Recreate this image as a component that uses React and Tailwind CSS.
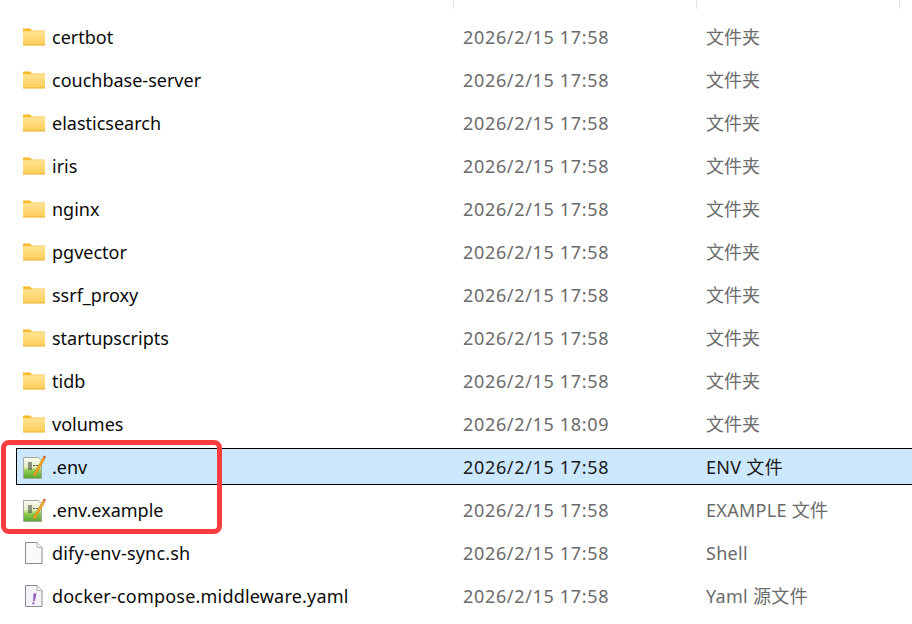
import React from "react";

const font = "font-['Noto_Sans','Noto_Sans_CJK_SC',sans-serif]";

const files = [
    { name: "certbot", date: "2026/2/15 17:58", type: "文件夹", icon: "folder" },
    { name: "couchbase-server", date: "2026/2/15 17:58", type: "文件夹", icon: "folder" },
    { name: "elasticsearch", date: "2026/2/15 17:58", type: "文件夹", icon: "folder" },
    { name: "iris", date: "2026/2/15 17:58", type: "文件夹", icon: "folder" },
    { name: "nginx", date: "2026/2/15 17:58", type: "文件夹", icon: "folder" },
    { name: "pgvector", date: "2026/2/15 17:58", type: "文件夹", icon: "folder" },
    { name: "ssrf_proxy", date: "2026/2/15 17:58", type: "文件夹", icon: "folder" },
    { name: "startupscripts", date: "2026/2/15 17:58", type: "文件夹", icon: "folder" },
    { name: "tidb", date: "2026/2/15 17:58", type: "文件夹", icon: "folder" },
    { name: "volumes", date: "2026/2/15 18:09", type: "文件夹", icon: "folder" },
    { name: ".env", date: "2026/2/15 17:58", type: "ENV 文件", icon: "notepad", selected: true },
    { name: ".env.example", date: "2026/2/15 17:58", type: "EXAMPLE 文件", icon: "notepad" },
    { name: "dify-env-sync.sh", date: "2026/2/15 17:58", type: "Shell", icon: "file" },
    { name: "docker-compose.middleware.yaml", date: "2026/2/15 17:58", type: "Yaml 源文件", icon: "yaml" },
];

const FolderIcon = () => (
    <svg width="23" height="24" viewBox="0 0 23 24">
        <defs>
            <linearGradient id="folderFill" x1="0" y1="0" x2="0" y2="1">
                <stop offset="0" stopColor="#ffe594" />
                <stop offset="1" stopColor="#fdcd5a" />
            </linearGradient>
        </defs>
        <path d="M0 4.5C0 3.9.4 3.5 1 3.5h6L9.5 6H22v1.5H0z" fill="#f9b721" />
        <rect x="0" y="6" width="22" height="14" fill="url(#folderFill)" />
        <rect x="0" y="5.5" width="22" height=".8" fill="#fac34a" />
        <rect x="0" y="19.5" width="22" height="1" fill="#edae2c" />
    </svg>
);

const NotepadIcon = () => (
    <svg width="23" height="26" viewBox="0 0 23 26">
        <defs>
            <linearGradient id="padFill" x1="0" y1="0" x2="0" y2="1">
                <stop offset="0" stopColor="#fbfbf4" />
                <stop offset="0.45" stopColor="#e2eec0" />
                <stop offset="0.62" stopColor="#93cb50" />
                <stop offset="1" stopColor="#52a92f" />
            </linearGradient>
        </defs>
        <path d="M.5 3.5h15l3 3v18H.5z" fill="url(#padFill)" stroke="#a3a89f" />
        <path d="M6 8v8M8 8v8" stroke="#333" strokeWidth="1" />
        <path d="M10 11.5h2M13 11.5h2" stroke="#555" strokeWidth="1.2" />
        <path d="M10 21 20 3.5l2 1.2L12 22.2z" fill="#eea21f" stroke="#c08022" strokeWidth=".4" />
        <path d="M20 3.5 21 1.5l1.8 1-.8 2.2z" fill="#c7562c" />
    </svg>
);

const FileIcon = ({ mark }) => (
    <svg width="18" height="24" viewBox="0 0 18 24">
        <path d="M.5 1.5h11.5l5 5v16H.5z" fill={mark ? "#f6f4fa" : "#fafafa"} stroke="#8b8b8b" />
        <path d="M12 1.5v5h5" fill="#f0f0f0" stroke="#b5b5b5" />
        {mark && <path d="M8.5 9.5h3l-1.7 7.5H8.2zM7.5 18.2h1.9l-.3 2H7.2z" fill="#8a5cc0" />}
    </svg>
);

const RowIcon = ({ icon }) => {
    if (icon === "folder") return <FolderIcon />;
    if (icon === "notepad") return <NotepadIcon />;
    return <FileIcon mark={icon === "yaml"} />;
};

const App = () => {
    return (
        <div className={`relative h-[624px] w-[912px] overflow-hidden bg-white ${font}`}>
            {/* column dividers at the very top */}
            <div className="flex h-[9px]">
                <div className="ml-[453px] w-px bg-[#e5e5e5]" />
                <div className="ml-[242px] w-px bg-[#e5e5e5]" />
                <div className="ml-[202px] w-px bg-[#e5e5e5]" />
            </div>

            <div className="ml-4 mt-[9px] flex flex-col gap-[6px]">
                {files.map((file) => {
                    const isPlainFile = file.icon === "file" || file.icon === "yaml";
                    return (
                        <div
                            key={file.name}
                            className={`flex h-[37px] w-[900px] shrink-0 items-center border text-[18px] ${
                                file.selected ? "border-black bg-[#cce8ff]" : "border-transparent"
                            }`}
                        >
                            <div className="flex w-[446px] items-center pl-[6px] text-[#0a0a0a]">
                                <div className="flex w-[29px] justify-start">
                                    <div className={isPlainFile ? "pl-[2px]" : ""}>
                                        <RowIcon icon={file.icon} />
                                    </div>
                                </div>
                                <span className={`whitespace-nowrap pt-[2px] ${isPlainFile ? "tracking-[0.2px]" : ""}`}>{file.name}</span>
                            </div>
                            <div className={`w-[243px] whitespace-nowrap pt-[2px] tracking-[0.67px] ${file.selected ? "text-[#1a1a1a]" : "text-[#6b6b6b]"}`}>
                                {file.date}
                            </div>
                            <div className={`whitespace-nowrap pt-[2px] ${file.icon === "folder" ? "" : "tracking-[0.3px]"} ${file.selected ? "text-[#1a1a1a]" : "text-[#6b6b6b]"}`}>
                                {file.type}
                            </div>
                        </div>
                    );
                })}
            </div>

            {/* red annotation box */}
            <div className="absolute left-[1px] top-[440px] h-[94px] w-[221px] rounded-[8px] border-[5px] border-[#fc3d3f]" />
        </div>
    );
};

export default App;
